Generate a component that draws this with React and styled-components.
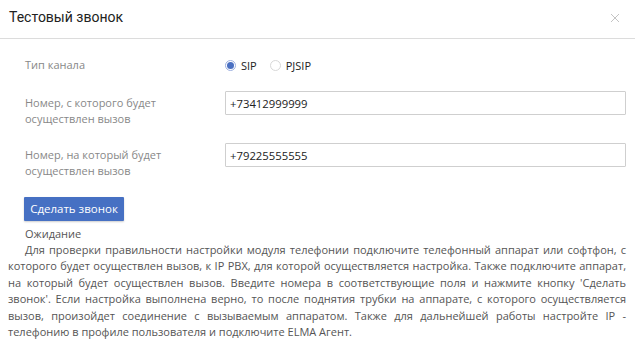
import React from "react";
import styled, { createGlobalStyle } from "styled-components";

const Global = createGlobalStyle`
  html, body { margin: 0; padding: 0; background: #fff; }
  body { font-family: "Open Sans", "Liberation Sans", sans-serif; }
  * { box-sizing: border-box; }
`;

const Dialog = styled.div`
  width: 635px;
  height: 339px;
  background: #fff;
  overflow: hidden;
`;

const Header = styled.div`
  height: 39px;
  border-bottom: 1px solid #dcdcdc;
  display: flex;
  align-items: flex-start;
  justify-content: space-between;
  padding: 7px 15px 0 9px;
`;

const Title = styled.div`
  font-family: Roboto, "Open Sans", sans-serif;
  font-size: 14px;
  line-height: 20px;
  color: #222;
`;

const Close = styled.button`
  border: 0;
  background: none;
  padding: 0;
  margin-top: 6px;
  width: 10px;
  height: 10px;
  cursor: pointer;
  display: flex;
`;

const Form = styled.div`
  padding: 17px 9px 0 25px;
  display: flex;
  flex-direction: column;
  gap: 16px;
`;

const Row = styled.div`
  display: grid;
  grid-template-columns: 200px 1fr;
  align-items: start;
  min-height: ${(p) => p.$h}px;
`;

const Label = styled.div`
  font-size: 11px;
  line-height: 16px;
  color: #888;
  padding-top: ${(p) => p.$pt || 0}px;
  padding-right: 20px;
`;

const Radios = styled.div`
  display: flex;
  align-items: center;
  height: 19px;
  gap: 13px;
`;

const RadioItem = styled.label`
  display: flex;
  align-items: center;
  gap: 5px;
  font-size: 11px;
  color: #222;
`;

const Circle = styled.span`
  width: 11px;
  height: 11px;
  border-radius: 50%;
  border: 1px solid ${(p) => (p.$on ? "#9db0e0" : "#d8d8d8")};
  background: #fff;
  display: flex;
  align-items: center;
  justify-content: center;
  &::after {
    content: "";
    width: 7px;
    height: 7px;
    border-radius: 50%;
    background: ${(p) => (p.$on ? "#4a70c2" : "transparent")};
  }
`;

const Input = styled.input`
  height: 24px;
  width: 100%;
  border: 1px solid #cfcfcf;
  border-radius: 1px;
  padding: 0 4px;
  font-family: "Open Sans", "Liberation Sans", sans-serif;
  font-size: 11.3px;
  color: #222;
  outline: none;
  background: #fff;
`;

const ButtonRow = styled.div`
  padding: 17px 0 0 24px;
`;

const Button = styled.button`
  width: 100px;
  height: 24px;
  border: 0;
  border-radius: 1px;
  background: #4670c3;
  color: #fff;
  font-family: "Open Sans", "Liberation Sans", sans-serif;
  font-size: 11.5px;
  padding: 0;
  box-shadow: 0 1px 2px rgba(0, 0, 0, 0.2);
  cursor: pointer;
`;

const Info = styled.div`
  padding: 5px 9px 0 8px;
  font-size: 11px;
  line-height: 16.4px;
  color: #555;
`;

const Status = styled.div`
  padding-left: 17px;
`;

const Text = styled.p`
  margin: 0;
  text-indent: 17px;
  text-align: justify;
`;

export default function App() {
  return (
    <Dialog>
      <Global />
      <Header>
        <Title>Тестовый звонок</Title>
        <Close aria-label="Закрыть">
          <svg width="10" height="10" viewBox="0 0 10 10">
            <path d="M1 1L9 9M9 1L1 9" stroke="#c4c4c4" strokeWidth="1" fill="none" />
          </svg>
        </Close>
      </Header>
      <Form>
        <Row $h={19}>
          <Label $pt={1}>Тип канала</Label>
          <Radios>
            <RadioItem>
              <Circle $on />
              SIP
            </RadioItem>
            <RadioItem>
              <Circle />
              PJSIP
            </RadioItem>
          </Radios>
        </Row>
        <Row $h={36}>
          <Label $pt={4}>Номер, с которого будет осуществлен вызов</Label>
          <Input defaultValue="+73412999999" />
        </Row>
        <Row $h={36}>
          <Label $pt={4}>Номер, на который будет осуществлен вызов</Label>
          <Input defaultValue="+79225555555" />
        </Row>
      </Form>
      <ButtonRow>
        <Button>Сделать звонок</Button>
      </ButtonRow>
      <Info>
        <Status>Ожидание</Status>
        <Text>
          Для проверки правильности настройки модуля телефонии подключите телефонный аппарат или софтфон, с которого будет осуществлен вызов, к IP PBX, для которой осуществляется настройка. Также подключите аппарат, на который будет осуществлен вызов. Введите номера в соответствующие поля и нажмите кнопку 'Сделать звонок'. Если настройка выполнена верно, то после поднятия трубки на аппарате, с которого осуществляется вызов, произойдет соединение с вызываемым аппаратом. Также для дальнейшей работы настройте IP - телефонию в профиле пользователя и подключите ELMA Агент.
        </Text>
      </Info>
    </Dialog>
  );
}
